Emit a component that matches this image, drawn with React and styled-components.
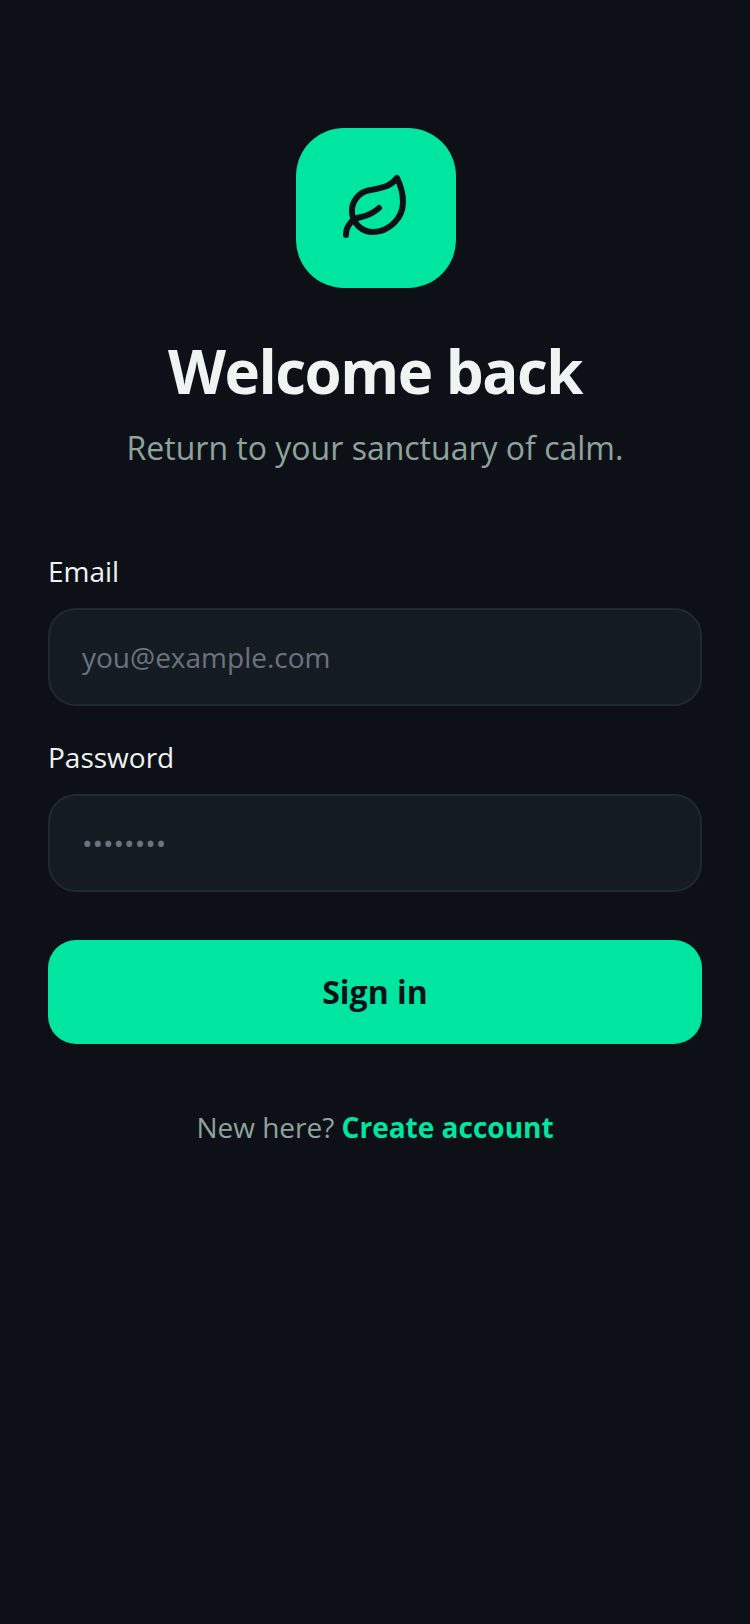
import React from "react";
import styled, { createGlobalStyle } from "styled-components";
import { Leaf } from "lucide-react";

const GlobalStyle = createGlobalStyle`
  html, body {
    margin: 0;
    padding: 0;
    background: #0d1117;
  }
  * {
    box-sizing: border-box;
  }
`;

const Page = styled.main`
  min-height: 1624px;
  padding: 128px 48px 48px;
  background: #0d1117;
  font-family: "Open Sans", "Liberation Sans", sans-serif;
  color: #eef4f2;
`;

const Header = styled.header`
  display: flex;
  flex-direction: column;
  align-items: center;
  margin-bottom: 80px;
`;

const LogoTile = styled.div`
  width: 160px;
  height: 160px;
  margin: 0 0 44px 2px;
  border-radius: 48px;
  background: #00e6a0;
  color: #0d1117;
  display: flex;
  align-items: center;
  justify-content: center;
`;

const Title = styled.h1`
  margin: 0 0 14px;
  font-size: 60px;
  line-height: 78px;
  font-weight: 700;
  letter-spacing: -1.5px;
  color: #eef4f2;
`;

const Subtitle = styled.p`
  margin: 0;
  font-size: 32px;
  line-height: 48px;
  color: #8fa39b;
`;

const Form = styled.form`
  display: flex;
  flex-direction: column;
`;

const Field = styled.label`
  display: flex;
  flex-direction: column;
  margin-bottom: 32px;
  font-size: 28px;
  line-height: 38px;
  color: #eef4f2;
`;

const FieldName = styled.span`
  margin-bottom: 18px;
`;

const Input = styled.input`
  width: 100%;
  height: 98px;
  padding: 0 32px;
  border: 2px solid #1f2a30;
  border-radius: 28px;
  background: #151c21;
  color: #eef4f2;
  font-family: inherit;
  font-size: 28px;
  outline: none;
  &::placeholder {
    color: #6b7280;
    opacity: 1;
  }
`;

const SubmitButton = styled.button`
  height: 104px;
  margin-top: 16px;
  padding: 0 0 2px;
  border: none;
  border-radius: 28px;
  background: #00e6a0;
  color: #0d1117;
  font-family: inherit;
  font-size: 32px;
  font-weight: 700;
`;

const Footer = styled.p`
  margin: 64px 0 0;
  text-align: center;
  font-size: 28px;
  line-height: 38px;
  color: #8fa39b;
`;

const FooterLink = styled.a`
  color: #00e6a0;
  font-weight: 700;
`;

export default function App() {
  return (
    <>
      <GlobalStyle />
      <Page>
        <Header>
          <LogoTile>
            <Leaf size={72} strokeWidth={2} />
          </LogoTile>
          <Title>Welcome back</Title>
          <Subtitle>Return to your sanctuary of calm.</Subtitle>
        </Header>
        <Form>
          <Field>
            <FieldName>Email</FieldName>
            <Input type="email" placeholder="you@example.com" />
          </Field>
          <Field>
            <FieldName>Password</FieldName>
            <Input type="password" placeholder="••••••••" />
          </Field>
          <SubmitButton type="button">Sign in</SubmitButton>
        </Form>
        <Footer>
          New here? <FooterLink>Create account</FooterLink>
        </Footer>
      </Page>
    </>
  );
}
